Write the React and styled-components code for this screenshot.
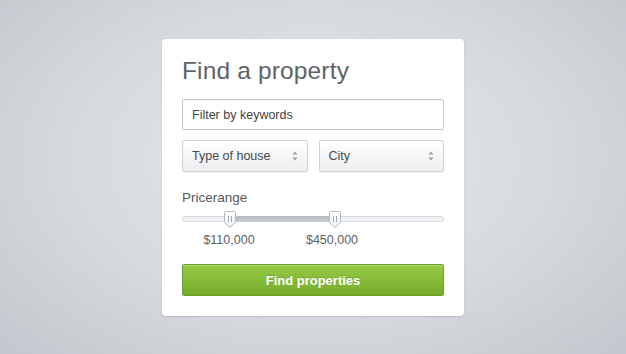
import React, { useState } from "react";
import styled, { createGlobalStyle } from "styled-components";

const GlobalStyle = createGlobalStyle`
  html, body {
    margin: 0;
    padding: 0;
    height: 100%;
  }
  body {
    font-family: "Liberation Sans", Arial, sans-serif;
  }
  #root {
    height: 100%;
  }
`;

const Page = styled.div`
  width: 626px;
  height: 354px;
  display: flex;
  justify-content: center;
  align-items: flex-start;
  padding-top: 39px;
  box-sizing: border-box;
  background: radial-gradient(
    ellipse 70% 80% at 50% 45%,
    #e6e8ec 0%,
    #d6d9de 55%,
    #c3c7cd 100%
  );
`;

const Card = styled.div`
  width: 302px;
  height: 277px;
  box-sizing: border-box;
  background: #fff;
  border-radius: 4px;
  box-shadow: 0 1px 2px rgba(0, 0, 0, 0.12);
  padding: 18px 20px 0 20px;
  display: flex;
  flex-direction: column;
`;

const Title = styled.h1`
  margin: 0 0 14px 0;
  font-size: 24.5px;
  font-weight: normal;
  color: #5e6367;
  line-height: 28px;
  letter-spacing: 0.15px;
`;

const TextInput = styled.input`
  height: 31px;
  box-sizing: border-box;
  border: 1px solid #c5c8cc;
  border-radius: 2px;
  padding: 0 9px;
  font: inherit;
  font-size: 12.5px;
  color: #3f4245;
  outline: none;
  box-shadow: inset 0 1px 1px rgba(0, 0, 0, 0.05);

  &::placeholder {
    color: #3f4245;
  }
`;

const SelectRow = styled.div`
  display: flex;
  gap: 11px;
  margin-top: 10px;
`;

const Select = styled.div`
  flex: 1;
  height: 32px;
  box-sizing: border-box;
  border: 1px solid #cfd2d6;
  border-radius: 2px;
  background: linear-gradient(#ffffff, #eceef0);
  display: flex;
  align-items: center;
  justify-content: space-between;
  padding: 0 9px 0 9px;
  font-size: 12.5px;
  color: #45484b;
  box-shadow: 0 1px 1px rgba(0, 0, 0, 0.06);
`;

const Arrows = () => (
  <svg width="6" height="10" viewBox="0 0 6 10">
    <path d="M3 0.5 L5.5 3.5 H0.5 Z" fill="#9a9ea3" />
    <path d="M3 9.5 L5.5 6.5 H0.5 Z" fill="#9a9ea3" />
  </svg>
);

const Label = styled.div`
  margin-top: 18px;
  font-size: 13.5px;
  color: #55595d;
`;

const Slider = styled.div`
  position: relative;
  height: 16px;
  margin-top: 6px;
  display: flex;
  align-items: center;
`;

const Track = styled.div`
  width: 100%;
  height: 6px;
  box-sizing: border-box;
  border: 1px solid #d5d8dc;
  border-radius: 3px;
  background: linear-gradient(#eceef0, #f7f8f9);
  position: relative;
`;

const Fill = styled.div`
  position: absolute;
  top: -1px;
  bottom: -1px;
  background: linear-gradient(#b6bbc2, #c8ccd2);
`;

const Thumb = styled.div`
  position: absolute;
  top: 0;
  width: 12px;
  height: 17px;
  margin-left: -6px;
`;

const ThumbShape = () => (
  <svg width="12" height="17" viewBox="0 0 12 17">
    <defs>
      <linearGradient id="tg" x1="0" y1="0" x2="0" y2="1">
        <stop offset="0" stopColor="#ffffff" />
        <stop offset="1" stopColor="#eef0f2" />
      </linearGradient>
    </defs>
    <path
      d="M1.5 0.5 H10.5 Q11.5 0.5 11.5 1.5 V11.5 L6 16.5 L0.5 11.5 V1.5 Q0.5 0.5 1.5 0.5 Z"
      fill="url(#tg)"
      stroke="#b7bbc1"
    />
    <path d="M4.5 5 V11 M7.5 5 V11" stroke="#a4a9af" strokeWidth="1" />
  </svg>
);

const Values = styled.div`
  position: relative;
  height: 20px;
  margin-top: 6px;
`;

const Value = styled.span`
  position: absolute;
  top: 0;
  transform: translateX(-50%);
  font-size: 12.5px;
  color: #5d6165;
  white-space: nowrap;
`;

const Button = styled.button`
  margin-top: 11px;
  height: 32px;
  border: 1px solid #6e9f2d;
  border-radius: 2px;
  background: linear-gradient(#97cb45, #76ab2d);
  color: #fff;
  font: inherit;
  font-size: 13px;
  font-weight: bold;
  text-shadow: 0 -1px 0 rgba(0, 0, 0, 0.15);
  box-shadow: inset 0 1px 0 rgba(255, 255, 255, 0.25);
  cursor: pointer;
`;

const App = () => {
  const [range] = useState({ min: 48, max: 153 });

  return (
    <>
      <GlobalStyle />
      <Page>
        <Card>
          <Title>Find a property</Title>
          <TextInput placeholder="Filter by keywords" />
          <SelectRow>
            <Select>
              Type of house
              <Arrows />
            </Select>
            <Select>
              City
              <Arrows />
            </Select>
          </SelectRow>
          <Label>Pricerange</Label>
          <Slider>
            <Track>
              <Fill style={{ left: range.min, width: range.max - range.min }} />
            </Track>
            <Thumb style={{ left: range.min }}>
              <ThumbShape />
            </Thumb>
            <Thumb style={{ left: range.max }}>
              <ThumbShape />
            </Thumb>
          </Slider>
          <Values>
            <Value style={{ left: range.min - 1 }}>$110,000</Value>
            <Value style={{ left: range.max - 3 }}>$450,000</Value>
          </Values>
          <Button>Find properties</Button>
        </Card>
      </Page>
    </>
  );
};

export default App;
